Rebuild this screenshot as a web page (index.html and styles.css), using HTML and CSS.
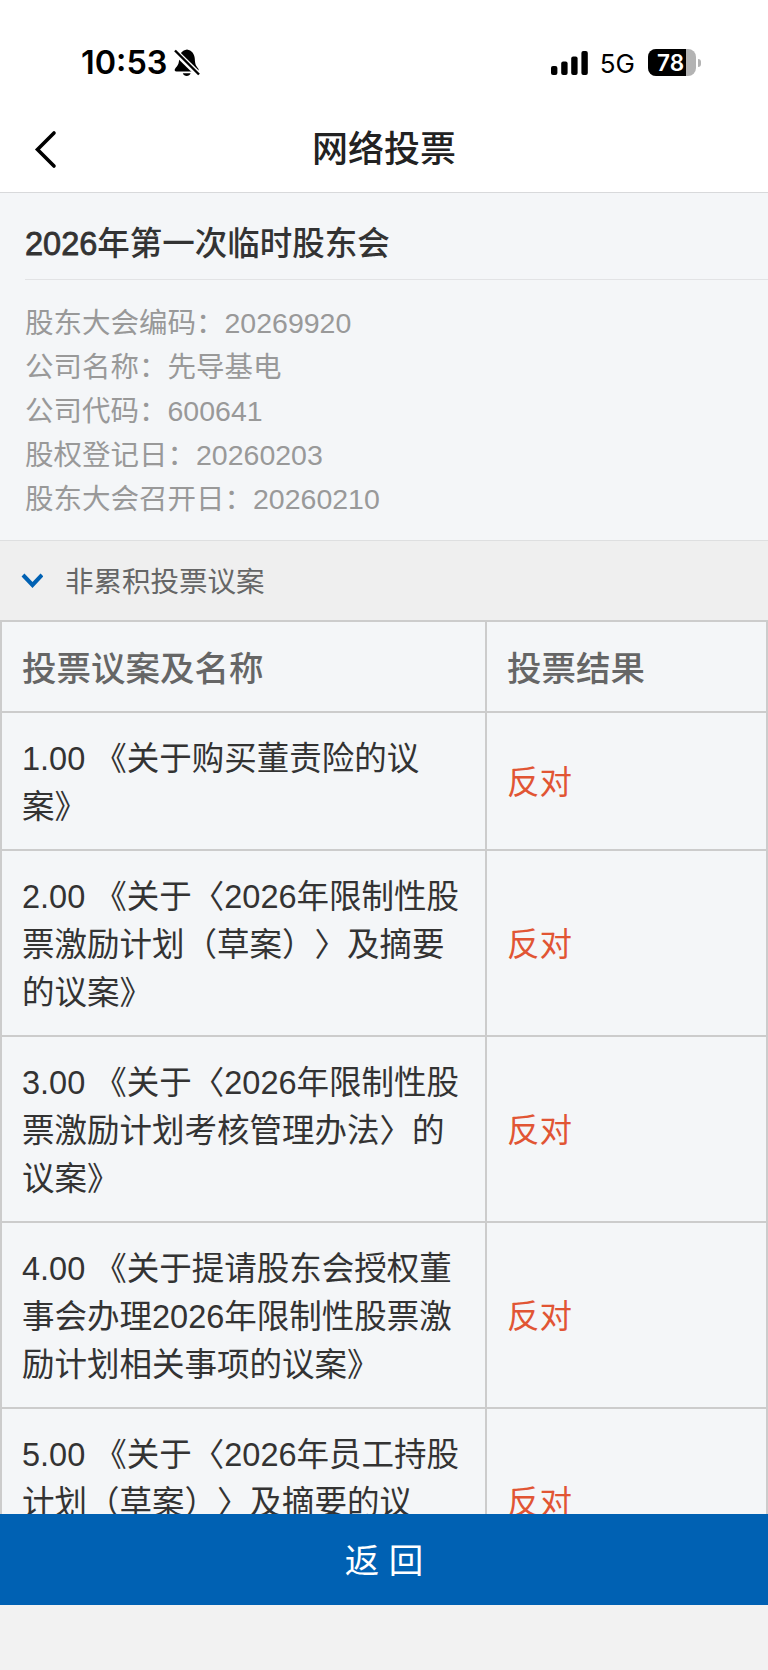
FILE: index.html
```html
<!DOCTYPE html>
<html lang="zh-CN">
  <head>
    <meta charset="UTF-8" />
    <meta name="viewport" content="width=device-width, initial-scale=1.0" />
    <title>网络投票</title>
    <link rel="stylesheet" href="styles.css">
  </head>

  <body>
    <div class="status-bar">
      <div class="status-left">
        <span class="time">10:53</span>
        <svg class="bell" width="26" height="28" viewBox="0 0 26 28">
          <path d="M13 0.5C8.2 1.2 5.4 5 5.2 9.8C5 15 3.6 16.8 1.4 19.2C0 20.8 0.6 22.6 2.6 22.6H22.6C24.8 22.6 25.2 20.6 24 19.2C21.8 16.6 21 15 20.8 9.8C20.6 5 17.6 1.2 13 0.5Z" />
          <path d="M8.8 24.2H16.6C16 26 14.5 27 12.7 27C10.9 27 9.4 26 8.8 24.2Z" />
          <path class="slash-gap" d="M0.5 2L25 26" />
          <path class="slash" d="M1 1.5L25 25.5" />
        </svg>
      </div>
      <div class="status-right">
        <svg class="signal" width="37" height="24" viewBox="0 0 37 24">
          <rect x="0" y="15" width="6.4" height="9" rx="2" />
          <rect x="10.2" y="10.5" width="6.4" height="13.5" rx="2" />
          <rect x="20.2" y="5.5" width="6.4" height="18.5" rx="2" />
          <rect x="30.4" y="0" width="6.4" height="24" rx="2" />
        </svg>
        <span class="network">5G</span>
        <div class="battery">
          <span class="battery-level">78</span>
        </div>
        <span class="battery-tip"></span>
      </div>
    </div>

    <div class="header">
      <svg class="back" width="24" height="40" viewBox="0 0 24 40">
        <path d="M20 4L3.5 20.5L20 37" />
      </svg>
      <h1>网络投票</h1>
    </div>

    <div class="content">
      <div class="meeting">
        <h2><span class="year">2026</span>年第一次临时股东会</h2>
        <div class="info">
          <p>股东大会编码：20269920</p>
          <p>公司名称：先导基电</p>
          <p>公司代码：600641</p>
          <p>股权登记日：20260203</p>
          <p>股东大会召开日：20260210</p>
        </div>
      </div>

      <div class="section">
        <svg class="arrow" width="22" height="16" viewBox="0 0 22 16">
          <path d="M2 2L11.5 12L21 2" />
        </svg>
        <span>非累积投票议案</span>
      </div>

      <table>
        <tr>
          <th class="name">投票议案及名称</th>
          <th>投票结果</th>
        </tr>
        <tr>
          <td>1.00 《关于购买董责险的议案》</td>
          <td class="against">反对</td>
        </tr>
        <tr>
          <td>2.00 《关于〈2026年限制性股票激励计划（草案）〉及摘要的议案》</td>
          <td class="against">反对</td>
        </tr>
        <tr>
          <td>3.00 《关于〈2026年限制性股票激励计划考核管理办法〉的议案》</td>
          <td class="against">反对</td>
        </tr>
        <tr>
          <td>4.00 《关于提请股东会授权董事会办理2026年限制性股票激励计划相关事项的议案》</td>
          <td class="against">反对</td>
        </tr>
        <tr>
          <td>5.00 《关于〈2026年员工持股计划（草案）〉及摘要的议案》</td>
          <td class="against">反对</td>
        </tr>
      </table>
    </div>

    <button class="return">返 回</button>
    <div class="safe-area"></div>
  </body>
</html>
```

FILE: styles.css
```css
* {
  margin: 0;
  padding: 0;
  box-sizing: border-box;
}

body {
  height: 1670px;
  display: flex;
  flex-direction: column;
  overflow: hidden;
  background: #f4f6f8;
  color: #333;
  font-family: 'Liberation Sans', 'Noto Sans CJK SC', sans-serif;
  text-spacing-trim: space-all;
}

.status-bar {
  height: 104px;
  flex: none;
  display: flex;
  align-items: center;
  justify-content: space-between;
  padding: 21px 67px 0 81px;
  background: #fff;
  color: #000;
  font-family: Inter, sans-serif;
}

.status-left,
.status-right {
  display: flex;
  align-items: center;
}

.time {
  padding-top: 1px;
  font-size: 32.4px;
  font-weight: 600;
  line-height: 40px;
}

.bell {
  margin-left: 7px;
}

.slash-gap {
  stroke: #fff;
  stroke-width: 6;
}

.slash {
  stroke: #000;
  stroke-width: 2.4;
}

.network {
  margin: 0 13px 0 12px;
  padding-top: 2px;
  font-size: 26px;
}

.battery {
  width: 48px;
  height: 27px;
  border-radius: 8px;
  overflow: hidden;
  background: #b3b3b3;
}

.battery-level {
  display: block;
  width: 38px;
  height: 27px;
  padding-left: 9px;
  background: #000;
  color: #fff;
  font-size: 22.5px;
  font-weight: 600;
  line-height: 27px;
}

.battery-tip {
  width: 3px;
  height: 8px;
  margin-left: 2px;
  border-radius: 0 3px 3px 0;
  background: #b3b3b3;
}

.header {
  height: 89px;
  flex: none;
  display: grid;
  grid-template-columns: 100px 1fr 100px;
  align-items: center;
  background: #fff;
  border-bottom: 1px solid #d8d9db;
}

.back {
  margin: 1px 0 0 34px;
  fill: none;
  stroke: #000;
  stroke-width: 3.6;
  stroke-linecap: round;
}

.header h1 {
  padding-bottom: 4px;
  color: #222;
  font-size: 36px;
  font-weight: 500;
  text-align: center;
}

.content {
  flex: 1;
  min-height: 0;
  overflow: hidden;
}

.meeting {
  height: 348px;
  padding-left: 25px;
  border-bottom: 1px solid #dedfe0;
}

.meeting h2 {
  height: 87px;
  padding-top: 27px;
  border-bottom: 1px solid #e2e3e5;
  font-size: 32.5px;
  font-weight: 500;
  line-height: 48px;
}

.year {
  -webkit-text-stroke: 0.8px #333;
}

.info {
  padding-top: 21px;
  color: #999;
  font-size: 28.5px;
  line-height: 44px;
}

.section {
  height: 79px;
  display: flex;
  align-items: center;
  padding-left: 21px;
  background: #efefef;
  color: #666;
  font-size: 28.5px;
}

.section span {
  padding-bottom: 3px;
}

.arrow {
  margin-right: 22px;
  fill: none;
  stroke: #0061b3;
  stroke-width: 4;
}

table {
  width: 100%;
  table-layout: fixed;
  border-collapse: separate;
  border-spacing: 0;
  border: 2px solid #ccc;
  border-width: 2px 0 0 2px;
}

th,
td {
  padding: 22px 20px 18px 20px;
  border: 1px solid #ccc;
  border-width: 0 2px 2px 0;
  font-size: 32.5px;
  line-height: 48px;
  text-align: left;
}

th {
  height: 91px;
  color: #666;
  font-size: 34.5px;
  font-weight: 500;
}

.name {
  width: 485px;
}

.against {
  color: #e15534;
}

.return {
  height: 91px;
  flex: none;
  padding-bottom: 4px;
  border: 0;
  background: #0061b3;
  color: #fff;
  font-family: inherit;
  font-size: 34.5px;
}

.safe-area {
  height: 65px;
  flex: none;
  background: #f2f2f2;
}
```
